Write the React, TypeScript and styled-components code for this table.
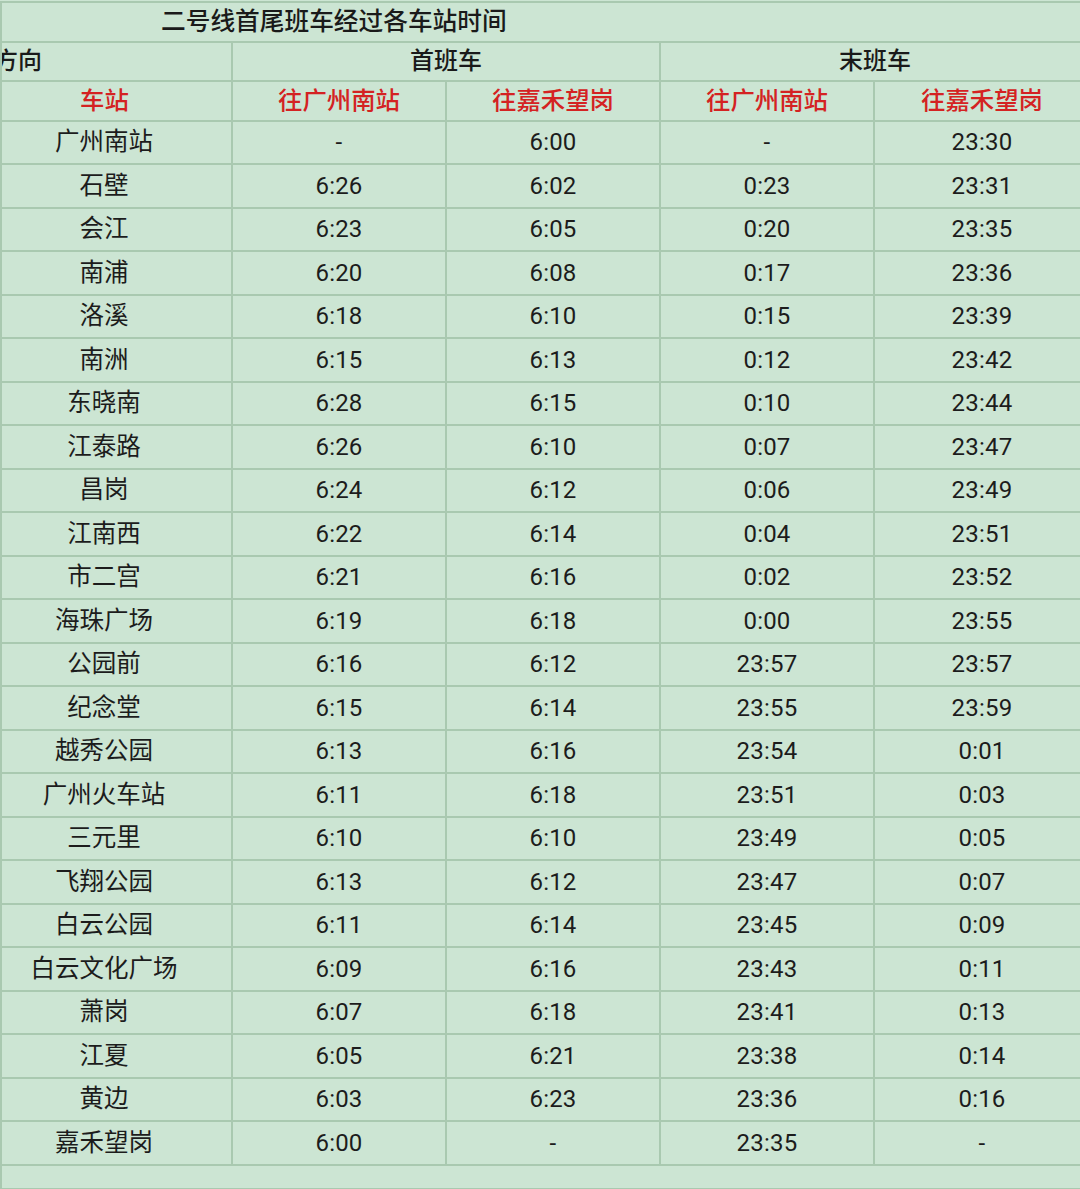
import React from "react";
import styled, { createGlobalStyle } from "styled-components";

const rows: string[][] = [
  ["广州南站", "-", "6:00", "-", "23:30"],
  ["石壁", "6:26", "6:02", "0:23", "23:31"],
  ["会江", "6:23", "6:05", "0:20", "23:35"],
  ["南浦", "6:20", "6:08", "0:17", "23:36"],
  ["洛溪", "6:18", "6:10", "0:15", "23:39"],
  ["南洲", "6:15", "6:13", "0:12", "23:42"],
  ["东晓南", "6:28", "6:15", "0:10", "23:44"],
  ["江泰路", "6:26", "6:10", "0:07", "23:47"],
  ["昌岗", "6:24", "6:12", "0:06", "23:49"],
  ["江南西", "6:22", "6:14", "0:04", "23:51"],
  ["市二宫", "6:21", "6:16", "0:02", "23:52"],
  ["海珠广场", "6:19", "6:18", "0:00", "23:55"],
  ["公园前", "6:16", "6:12", "23:57", "23:57"],
  ["纪念堂", "6:15", "6:14", "23:55", "23:59"],
  ["越秀公园", "6:13", "6:16", "23:54", "0:01"],
  ["广州火车站", "6:11", "6:18", "23:51", "0:03"],
  ["三元里", "6:10", "6:10", "23:49", "0:05"],
  ["飞翔公园", "6:13", "6:12", "23:47", "0:07"],
  ["白云公园", "6:11", "6:14", "23:45", "0:09"],
  ["白云文化广场", "6:09", "6:16", "23:43", "0:11"],
  ["萧岗", "6:07", "6:18", "23:41", "0:13"],
  ["江夏", "6:05", "6:21", "23:38", "0:14"],
  ["黄边", "6:03", "6:23", "23:36", "0:16"],
  ["嘉禾望岗", "6:00", "-", "23:35", "-"],
];

const directions = ["往广州南站", "往嘉禾望岗", "往广州南站", "往嘉禾望岗"];

const GlobalStyle = createGlobalStyle`
  html, body {
    margin: 0;
    padding: 0;
    background: #cce5d3;
    overflow: hidden;
  }
  body {
    font-family: Roboto, "Noto Sans CJK SC", sans-serif;
    color: #1c1c1c;
  }
`;

const Page = styled.div`
  width: 1080px;
  height: 1189px;
  padding-top: 1px;
  box-sizing: border-box;
  overflow: hidden;
  background: #cce5d3;
`;

const Sheet = styled.div`
  display: grid;
  width: 1089px;
  grid-template-columns: 229px 212px 212px 212px 214px;
  grid-template-rows: 38px 37px 37.5px repeat(24, 41.5px) 22px;
  gap: 2px;
  padding: 2px 0 2px 2px;
  background: #a9c9b0;
`;

const Cell = styled.div<{ $span?: number; $align?: "left" | "center" }>`
  grid-column: span ${({ $span }) => $span ?? 1};
  background: #cce5d3;
  display: flex;
  align-items: center;
  justify-content: ${({ $align }) => ($align === "left" ? "flex-start" : "center")};
  overflow: hidden;
  white-space: nowrap;
  font-size: 24px;
  box-sizing: border-box;
`;

const TitleCell = styled(Cell)`
  padding: 0 0 6px 159px;
  font-size: 24.7px;
  font-weight: 500;
  color: #1a1a1a;
`;

const GroupCell = styled(Cell)`
  padding-bottom: 6px;
  font-weight: 500;
  color: #1a1a1a;
`;

const DirectionLabel = styled.span`
  margin-left: -8px;
`;

const HeadCell = styled(Cell)<{ $station?: boolean }>`
  color: #d42222;
  font-weight: 500;
  font-size: 24.4px;
  padding-bottom: 4px;
  padding-right: ${({ $station }) => ($station ? "24px" : "0")};
`;

const StationCell = styled(Cell)`
  font-size: 24.5px;
  padding: 0 25px 5px 0;
`;

const TimeCell = styled(Cell)`
  letter-spacing: 0.2px;
`;

export default function App() {
  return (
    <Page>
      <GlobalStyle />
      <Sheet>
        <TitleCell $span={5} $align="left">二号线首尾班车经过各车站时间</TitleCell>
        <GroupCell $align="left">
          <DirectionLabel>方向</DirectionLabel>
        </GroupCell>
        <GroupCell $span={2}>首班车</GroupCell>
        <GroupCell $span={2}>末班车</GroupCell>
        <HeadCell $station>车站</HeadCell>
        {directions.map((d, i) => (
          <HeadCell key={i}>{d}</HeadCell>
        ))}
        {rows.map(([station, ...times]) => (
          <React.Fragment key={station}>
            <StationCell>{station}</StationCell>
            {times.map((t, i) => (
              <TimeCell key={i}>{t}</TimeCell>
            ))}
          </React.Fragment>
        ))}
        <Cell $span={5} />
      </Sheet>
    </Page>
  );
}
